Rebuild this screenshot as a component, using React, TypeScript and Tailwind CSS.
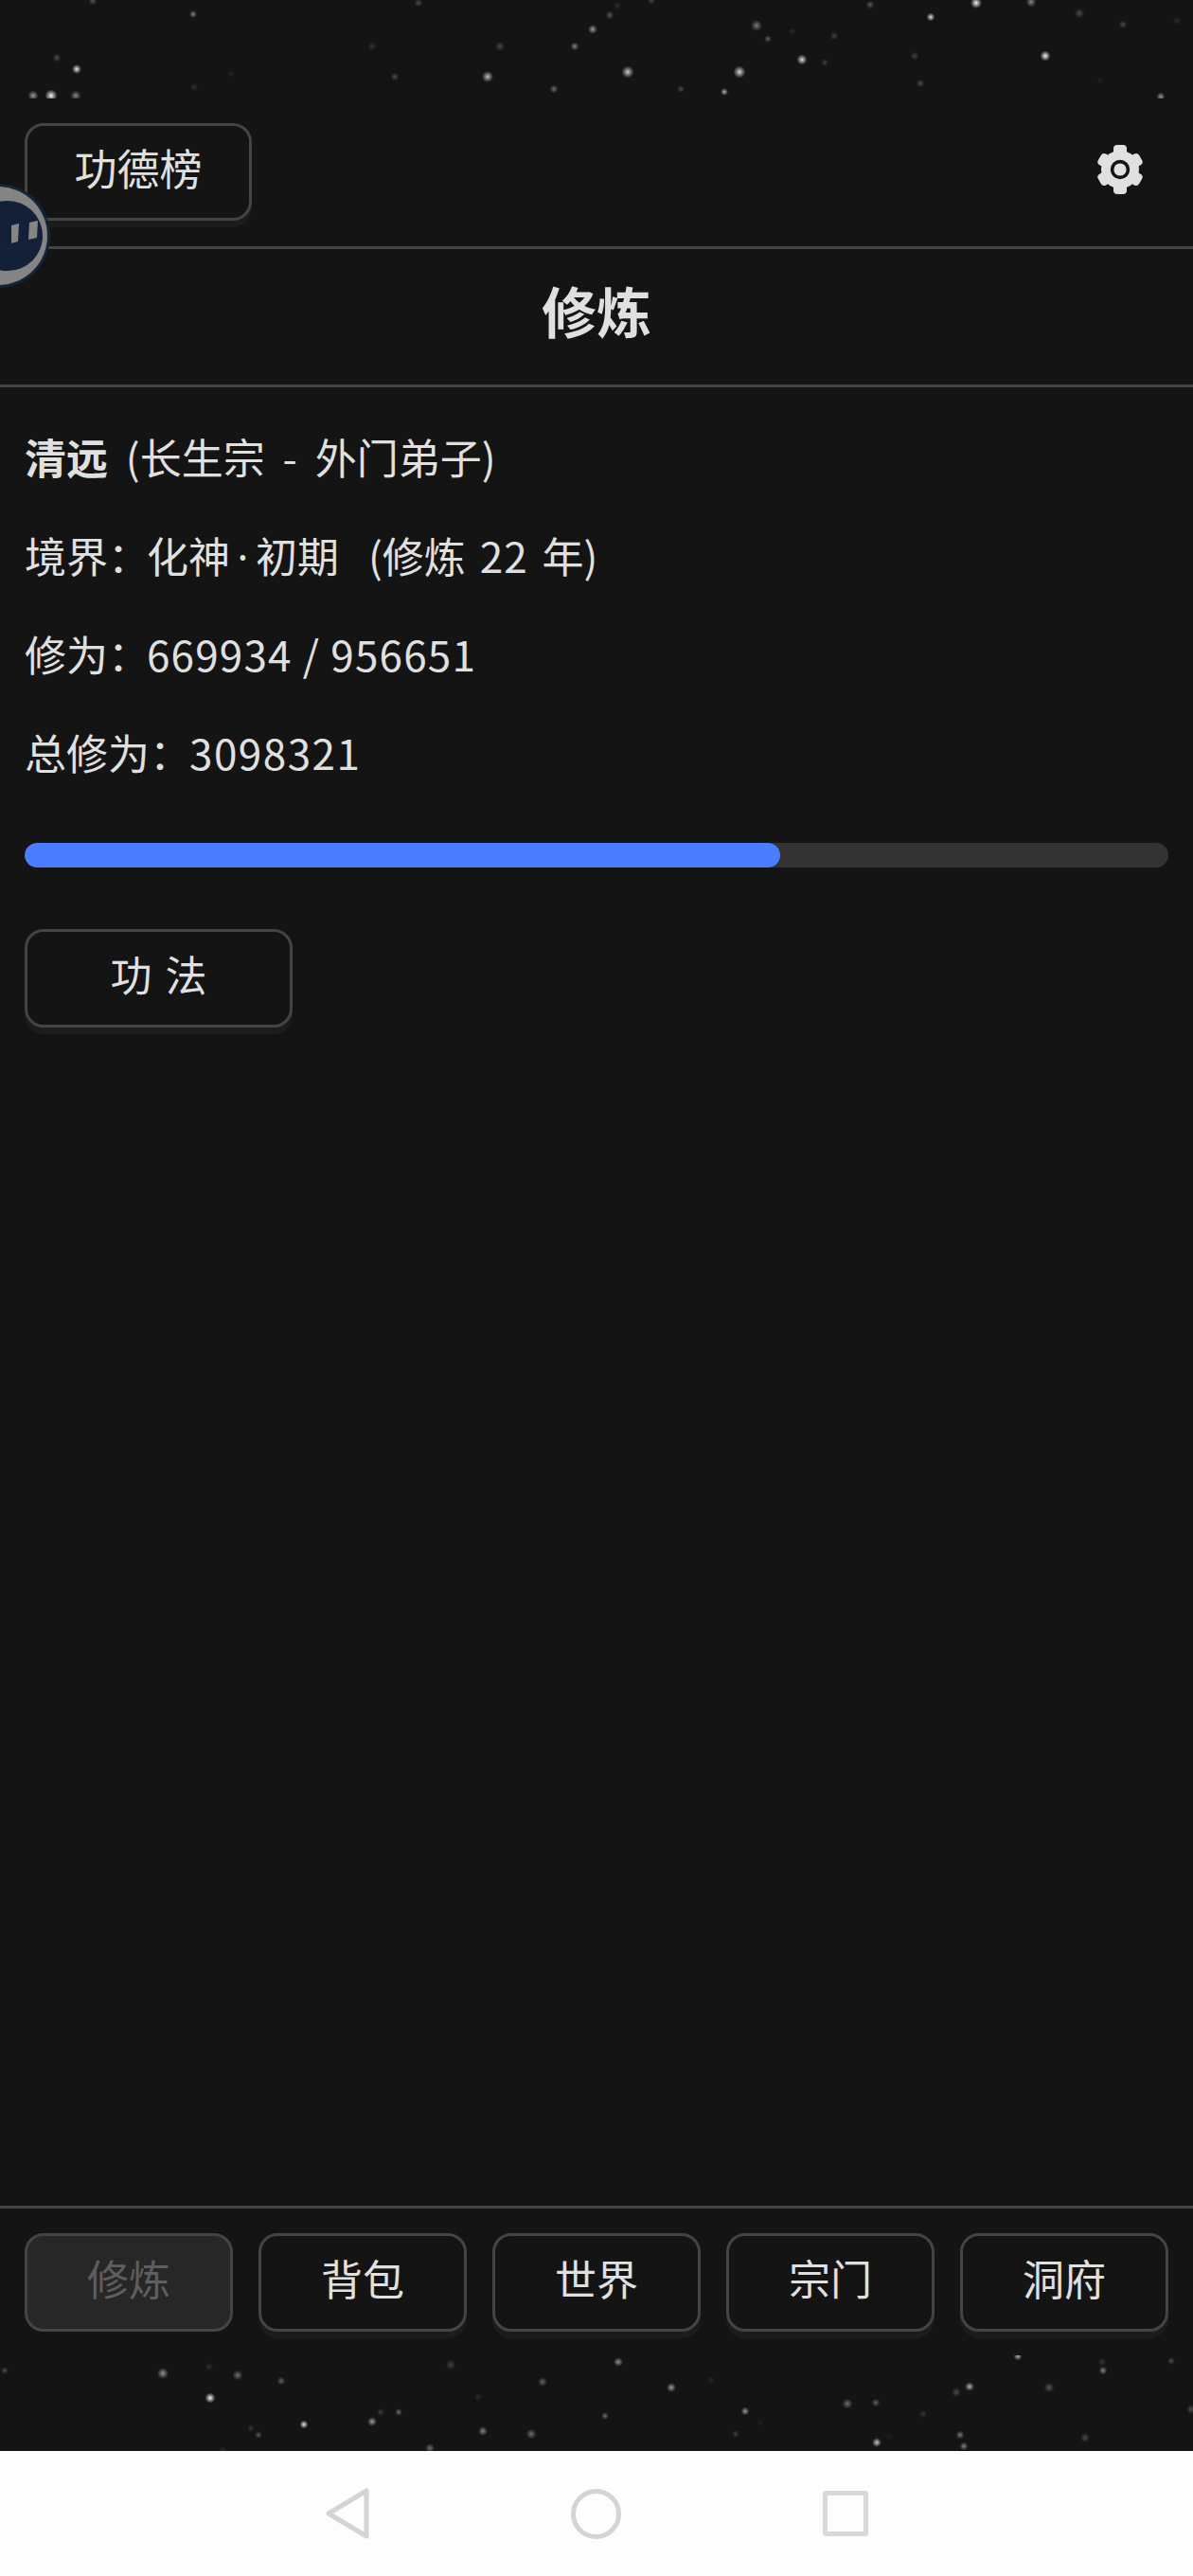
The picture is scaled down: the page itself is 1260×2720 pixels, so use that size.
const font = "font-['Noto_Sans_CJK_SC','Noto_Sans',sans-serif]";

// [x, y, radius, opacity]
const topStars = [
  [98, 1, 3, 0.3], [442, 3, 3, 0.25], [204, 15, 2.5, 0.5], [626, 31, 3.5, 0.6], [60, 61, 3, 0.25], [81, 73, 3.5, 0.95],
  [393, 49, 3, 0.15], [528, 49, 3.5, 0.25], [607, 49, 3, 0.5], [417, 81, 3, 0.25], [515, 81, 4.5, 0.75], [585, 94, 3, 0.4],
  [244, 78, 2.5, 0.08], [205, 92, 3, 0.12], [35, 101, 4, 0.6], [54, 101, 5, 1], [80, 101, 4, 0.5],
  [644, 16, 3, 0.3], [652, 6, 2.5, 0.12], [688, 1, 2.5, 0.2], [799, 27, 4.5, 0.45], [837, 33, 2.5, 0.1], [811, 41, 2.5, 0.35],
  [881, 38, 3, 0.2], [919, 5, 3, 0.3], [983, 18, 3, 0.9], [1031, 3, 4.5, 1], [1089, 2, 4, 0.5], [1140, 14, 4, 0.25],
  [1186, 26, 3, 0.25], [1243, 22, 3, 0.1], [847, 63, 4, 0.9], [871, 66, 2.5, 0.2], [663, 76, 5, 0.8], [781, 76, 5, 0.85],
  [719, 94, 2.5, 0.25], [765, 97, 2.5, 0.7], [966, 59, 3, 0.2], [972, 88, 3, 0.25], [1104, 59, 4, 1], [1162, 85, 2.5, 0.06],
  [1226, 102, 3, 0.6],
];

const bottomStars = [
  [5, 16, 2.5, 0.25], [172, 19, 4.5, 0.55], [221, 12, 3, 0.12], [251, 21, 4, 0.4], [297, 27, 3, 0.35], [222, 45, 4, 1],
  [321, 73, 3, 0.95], [393, 70, 3.5, 0.6], [402, 60, 2.5, 0.2], [421, 60, 2.5, 0.4], [265, 77, 2.5, 0.15], [273, 84, 2.5, 0.3],
  [476, 10, 4, 0.2], [573, 28, 3.5, 0.35], [505, 44, 2.5, 0.12], [510, 80, 3.5, 0.5], [561, 83, 4, 0.4], [454, 98, 3.5, 0.4],
  [235, 100, 2.5, 0.1], [653, 7, 3.5, 0.55], [709, 34, 3.5, 0.6], [751, 26, 2.5, 0.08], [639, 64, 2.5, 0.4], [787, 59, 3, 0.6],
  [803, 71, 2.5, 0.05], [777, 83, 2.5, 0.2], [895, 51, 4, 0.4], [925, 50, 3, 0.35], [975, 62, 3, 0.15], [926, 92, 3.5, 0.8],
  [939, 86, 2.5, 0.05], [1014, 84, 3, 0.45], [1018, 96, 3, 0.5], [1010, 39, 3.5, 0.25], [1024, 33, 3.5, 0.7], [1075, 1, 3, 0.7],
  [1108, 34, 4, 0.3], [1164, 7, 3, 0.15], [1165, 16, 3, 0.5], [1237, 6, 2.5, 0.25], [1146, 87, 3.5, 0.25], [1258, 57, 3.5, 0.25],
];

const tabs = ['修炼', '背包', '世界', '宗门', '洞府'];

function Stars({ id, stars, height }: { id: string; stars: number[][]; height: number }) {
  return (
    <svg width="1260" height={height} viewBox={`0 0 1260 ${height}`} className="block shrink-0">
      <defs>
        <radialGradient id={id}>
          <stop offset="0%" stopColor="#ffffff" />
          <stop offset="35%" stopColor="#ffffff" stopOpacity="0.6" />
          <stop offset="100%" stopColor="#ffffff" stopOpacity="0" />
        </radialGradient>
      </defs>
      {stars.map(([x, y, r, o], i) => (
        <circle key={i} cx={x} cy={y} r={r + 1.5} fill={`url(#${id})`} opacity={o} />
      ))}
    </svg>
  );
}

function GearIcon() {
  return (
    <svg width="50" height="52" viewBox="-25 -26 50 52">
      <circle r="20" fill="#e0e0e0" />
      {[0, 60, 120].map((a) => (
        <rect key={a} x="-7" y="-26" width="14" height="52" rx="4" fill="#e0e0e0" transform={`rotate(${a}) scale(${a ? 0.96 : 1})`} />
      ))}
      <circle r="8.4" fill="none" stroke="#141414" strokeWidth="3.6" />
    </svg>
  );
}

function FloatBall() {
  return (
    <svg width="58" height="112" viewBox="0 0 58 112" className="absolute left-0 top-[193px] opacity-95">
      <circle cx="-2" cy="56" r="55" fill="#16263c" />
      <circle cx="-2" cy="56" r="52" fill="#8a8a8a" />
      <circle cx="8" cy="56" r="37" fill="#13213a" />
      <path d="M12 45 L20 43 L19 62 L12 64 Z" fill="#8c8c8c" />
      <path d="M31 42 L40 40 L39 58 L30 60 Z" fill="#8c8c8c" />
    </svg>
  );
}

function OutlineButton({ children, className }: { children: React.ReactNode; className: string }) {
  return (
    <button className={`flex items-center justify-center rounded-[20px] border-[3px] border-[#444444] bg-[#141414] pb-[10px] text-[44px] text-[#e0e0e0] shadow-[0_7px_0_#1c1c1c] ${className}`}>
      {children}
    </button>
  );
}

export default function App() {
  return (
    <div className={`${font} relative flex h-[2720px] w-[1260px] flex-col overflow-hidden bg-[#141414] text-[#e0e0e0]`}>
      <Stars id="star-top" stars={topStars} height={104} />

      <header className="flex h-[159px] shrink-0 items-start justify-between border-b-[3px] border-[#444444] pl-[26px] pr-[52px] pt-[26px]">
        <OutlineButton className="h-[103px] w-[240px] !text-[45px]">功德榜</OutlineButton>
        <div className="pt-[23px]">
          <GearIcon />
        </div>
      </header>

      <h1 className="flex h-[146px] shrink-0 items-center justify-center border-b-[3px] border-[#444444] pb-[14px] text-[58px] font-bold">修炼</h1>

      <main className="flex-1 px-[26px] pt-[42px]">
        <div className="flex flex-col gap-[42px] text-[44px] leading-[62px]">
          <p className="[word-spacing:9px]">
            <b className="font-bold">清远</b> (长生宗 - 外门弟子)
          </p>
          <p className="[word-spacing:5px]">
            <span className="-mr-[3px]">境界：</span>化神<span className="inline-block w-[27px] text-center font-['Noto_Sans'] leading-none">·</span>初期<span className="ml-[31px]">(修炼 <span className="tracking-[1px]">22</span> 年)</span>
          </p>
          <p>
            <span className="-mr-[3px]">修为：</span><span className="tracking-[1.2px]">669934 / 956651</span>
          </p>
          <p>
            <span className="-mr-[2px]">总修为：</span><span className="tracking-[1.5px]">3098321</span>
          </p>
        </div>
        <div className="mt-[65px] h-[26px] w-full overflow-hidden rounded-full bg-[#333333]">
          <div className="h-full w-[798px] rounded-full bg-[#4a7dff]" />
        </div>
        <OutlineButton className="mt-[65px] h-[104px] w-[283px] [word-spacing:4px]">功 法</OutlineButton>
      </main>

      <nav className="grid h-[132px] shrink-0 grid-cols-5 gap-[27px] border-t-[3px] border-[#444444] px-[26px] pt-[26px]">
        {tabs.map((tab, i) =>
          i === 0 ? (
            <button key={tab} className="flex h-[104px] items-center justify-center rounded-[20px] border-[3px] border-[#444444] bg-[#272727] pb-[10px] text-[44px] text-[#5e5e5e]">
              {tab}
            </button>
          ) : (
            <OutlineButton key={tab} className="h-[104px]">{tab}</OutlineButton>
          ),
        )}
      </nav>

      <div className="pt-[26px]">
        <Stars id="star-bottom" stars={bottomStars} height={101} />
      </div>

      <div className="flex h-[132px] shrink-0 items-center justify-center gap-[213px] bg-[#fdfdfd]">
        <svg width="46" height="54" viewBox="0 0 46 54" fill="none" stroke="#d4d4d4" strokeWidth="5" strokeLinejoin="round">
          <path d="M3 27 L43 3 L43 51 Z" />
        </svg>
        <svg width="53" height="53" viewBox="0 0 53 53" fill="none" stroke="#d4d4d4" strokeWidth="5">
          <circle cx="26.5" cy="26.5" r="24" />
        </svg>
        <svg width="48" height="48" viewBox="0 0 48 48" fill="none" stroke="#d8d8d8" strokeWidth="5" strokeLinejoin="round">
          <rect x="2.5" y="2.5" width="43" height="43" rx="1" />
        </svg>
      </div>

      <FloatBall />
    </div>
  );
}
